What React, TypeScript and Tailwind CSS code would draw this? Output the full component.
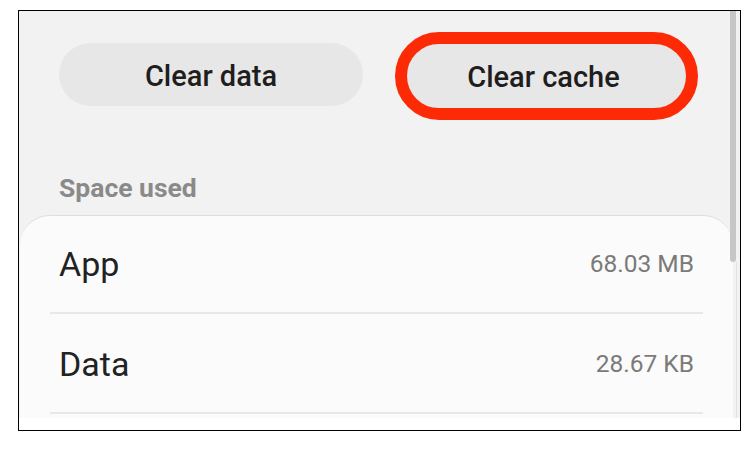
import React from "react";

export default function App() {
  return (
    <div className="w-[755px] h-[455px] bg-white" style={{ fontFamily: "Roboto, 'Noto Sans', sans-serif" }}>
      <div className="ml-[18px] pt-[10px]">
        <div className="w-[723px] h-[421px] border border-black bg-white">
          <div className="relative h-[407px] bg-[#f2f2f2] overflow-hidden">
            {/* buttons */}
            <div className="flex items-start pt-[21px] pl-[40px]">
              <button className="mt-[11px] w-[304px] h-[63px] rounded-full bg-[#e7e7e7] text-[29px] font-medium text-[#1e1e1e] leading-none pt-[3px]">
                Clear data
              </button>
              <div className="ml-[32px] w-[303px] h-[88px] rounded-full border-[12px] border-[#fd2a06] bg-[#e7e7e7] flex items-center justify-center pt-[3px]">
                <span className="text-[29px] font-medium text-[#1e1e1e] leading-none pr-[6px]">Clear cache</span>
              </div>
            </div>
            {/* section title */}
            <div className="mt-[55px] pl-[40px] text-[26.5px] leading-none font-bold text-[#8a8a8a]">Space used</div>
            {/* card */}
            <div className="mt-[13px] ml-[1px] w-[713px] rounded-t-[30px] bg-[#fbfbfb] border-t border-[#dedede]">
              <div className="mx-[30px]">
                <div className="h-[96px] flex items-center justify-between px-[9px] pt-[1px]">
                  <span className="text-[34px] text-[#222222] leading-none">App</span>
                  <span className="text-[24.5px] text-[#7a7a7a] leading-none">68.03 MB</span>
                </div>
                <div className="h-[2px] bg-[#e8e8e8]" />
                <div className="h-[98px] flex items-center justify-between px-[9px] pt-[3px]">
                  <span className="text-[34px] text-[#222222] leading-none">Data</span>
                  <span className="text-[24.5px] text-[#7a7a7a] leading-none">28.67 KB</span>
                </div>
                <div className="h-[2px] bg-[#e8e8e8]" />
                <div className="h-[4px]" />
              </div>
            </div>
            {/* scrollbar */}
            <div className="absolute left-[711px] top-0 w-[6px] h-[251px] bg-[#c6c6c6] rounded-b-[4px]" />
            <div className="absolute left-[717px] top-[251px] w-[1px] h-[156px] bg-[#e2e2e2]" />
          </div>
        </div>
      </div>
    </div>
  );
}
